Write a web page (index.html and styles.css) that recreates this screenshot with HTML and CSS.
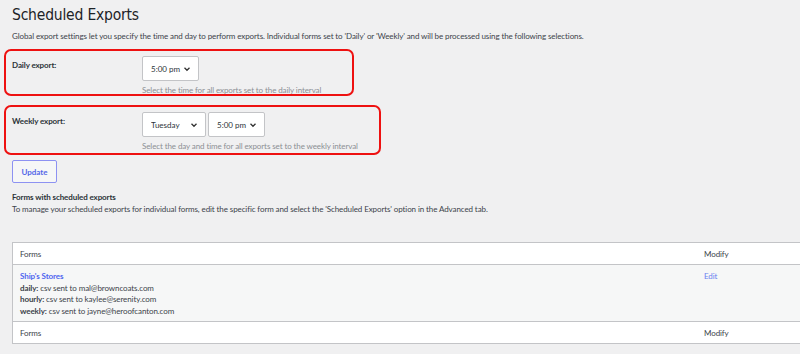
FILE: index.html
```html
<!DOCTYPE html>
<html lang="en">
<head>
    <meta charset="UTF-8">
    <meta name="viewport" content="width=device-width, initial-scale=1.0">
    <title>Scheduled Exports</title>
    <link rel="stylesheet" href="styles.css">
</head>
<body>
    <div class="wrap">
        <h1>Scheduled Exports</h1>
        <p class="intro">Global export settings let you specify the time and day to perform exports. Individual forms set to 'Daily' or 'Weekly' and will be processed using the following selections.</p>

        <form id="scheduleForm">
            <div class="setting-row daily">
                <label class="setting-label" for="dailyTime">Daily export:</label>
                <div class="setting-field">
                    <div class="selects">
                        <select id="dailyTime" class="time-select">
                            <option>5:00 pm</option>
                        </select>
                    </div>
                    <p class="hint">Select the time for all exports set to the daily interval</p>
                </div>
            </div>

            <div class="setting-row weekly">
                <label class="setting-label" for="weeklyDay">Weekly export:</label>
                <div class="setting-field">
                    <div class="selects">
                        <select id="weeklyDay" class="day-select">
                            <option>Tuesday</option>
                        </select>
                        <select id="weeklyTime" class="time-select">
                            <option>5:00 pm</option>
                        </select>
                    </div>
                    <p class="hint">Select the day and time for all exports set to the weekly interval</p>
                </div>
            </div>

            <button type="submit" class="update-btn">Update</button>
        </form>

        <h3>Forms with scheduled exports</h3>
        <p class="note">To manage your scheduled exports for individual forms, edit the specific form and select the 'Scheduled Exports' option in the Advanced tab.</p>

        <table class="forms-table">
            <thead>
                <tr>
                    <th class="col-form">Forms</th>
                    <th class="col-modify">Modify</th>
                </tr>
            </thead>
            <tbody>
                <tr>
                    <td class="col-form">
                        <a href="#" class="form-name">Ship's Stores</a>
                        <div><strong>daily:</strong> csv sent to mal@browncoats.com</div>
                        <div><strong>hourly:</strong> csv sent to kaylee@serenity.com</div>
                        <div><strong>weekly:</strong> csv sent to jayne@heroofcanton.com</div>
                    </td>
                    <td class="col-modify"><a href="#" class="edit-link">Edit</a></td>
                </tr>
            </tbody>
            <tfoot>
                <tr>
                    <th class="col-form">Forms</th>
                    <th class="col-modify">Modify</th>
                </tr>
            </tfoot>
        </table>
    </div>
</body>
</html>
```

FILE: styles.css
```css
html {
    overflow: hidden;
}

body {
    margin: 0;
    background-color: #f0f0f1;
    font-family: Lato, "Open Sans", Arial, sans-serif;
    font-size: 8px;
    letter-spacing: -0.1px;
    color: #3c434a;
}

.wrap {
    padding: 0 0 0 12px;
}

h1 {
    font-family: "DejaVu Sans Condensed", Lato, sans-serif;
    font-size: 15.5px;
    font-weight: 400;
    letter-spacing: -0.2px;
    color: #1d2327;
    margin: 0;
    padding: 3px 0 0;
    line-height: 24px;
}

.intro {
    margin: 3px 0 7px;
    line-height: 12px;
}

.setting-row {
    display: flex;
    border: 2px solid #ee1111;
    border-radius: 7px;
    margin-left: -8px;
    padding: 5px 0 0 6px;
    box-sizing: border-box;
}

.setting-row.daily {
    width: 350px;
    height: 47px;
    margin-bottom: 9px;
}

.setting-row.weekly {
    width: 377px;
    height: 50px;
    margin-bottom: 5px;
}

.setting-label {
    width: 130px;
    font-weight: 700;
    color: #2c3338;
    padding-top: 4px;
}

.selects {
    display: flex;
    gap: 2px;
}

select {
    font-family: inherit;
    font-size: 8px;
    color: #2c3338;
    height: 25px;
    border: 1px solid #c3c4c7;
    border-radius: 2px;
    background-color: #fff;
    padding: 0 12px 0 8px;
    appearance: none;
    -webkit-appearance: none;
    background-image: url("data:image/svg+xml;utf8,<svg xmlns='http://www.w3.org/2000/svg' width='10' height='10' viewBox='0 0 10 10'><path d='M2.5 3.8 L5 6.3 L7.5 3.8' fill='none' stroke='%23333' stroke-width='1.3'/></svg>");
    background-repeat: no-repeat;
    background-position: right 6px center;
}

.time-select {
    width: 57px;
}

.day-select {
    width: 64px;
}

.hint {
    margin: 4px 0 0;
    color: #8c8f94;
    line-height: 11px;
}

.update-btn {
    font-family: inherit;
    font-size: 8px;
    font-weight: 700;
    color: #5468e8;
    background-color: #f6f7f7;
    border: 1px solid #8d92f2;
    border-radius: 2px;
    width: 45px;
    height: 23px;
    padding: 0;
    cursor: pointer;
}

h3 {
    font-size: 8px;
    font-weight: 700;
    color: #2c3338;
    margin: 8px 0 0;
    line-height: 12px;
}

.note {
    margin: 0;
    line-height: 12px;
}

.forms-table {
    margin-top: 27px;
    width: 800px;
    border-collapse: collapse;
    border: 1px solid #c3c4c7;
    background-color: #fff;
}

.forms-table th {
    font-weight: 400;
    text-align: left;
    height: 21px;
    padding: 0 7px;
    color: #3c434a;
}

.forms-table thead th {
    border-bottom: 1px solid #c3c4c7;
}

.forms-table tfoot th {
    border-top: 1px solid #c3c4c7;
}

.forms-table tbody td {
    background-color: #f6f7f7;
    vertical-align: top;
    padding: 6px 7px 4px;
    line-height: 11.5px;
}

.forms-table .col-modify {
    width: 100px;
}

.forms-table strong {
    font-weight: 700;
}

.form-name {
    color: #4f66f0;
    font-weight: 700;
    text-decoration: none;
}

.edit-link {
    color: #6b7ff0;
    text-decoration: none;
}
```
